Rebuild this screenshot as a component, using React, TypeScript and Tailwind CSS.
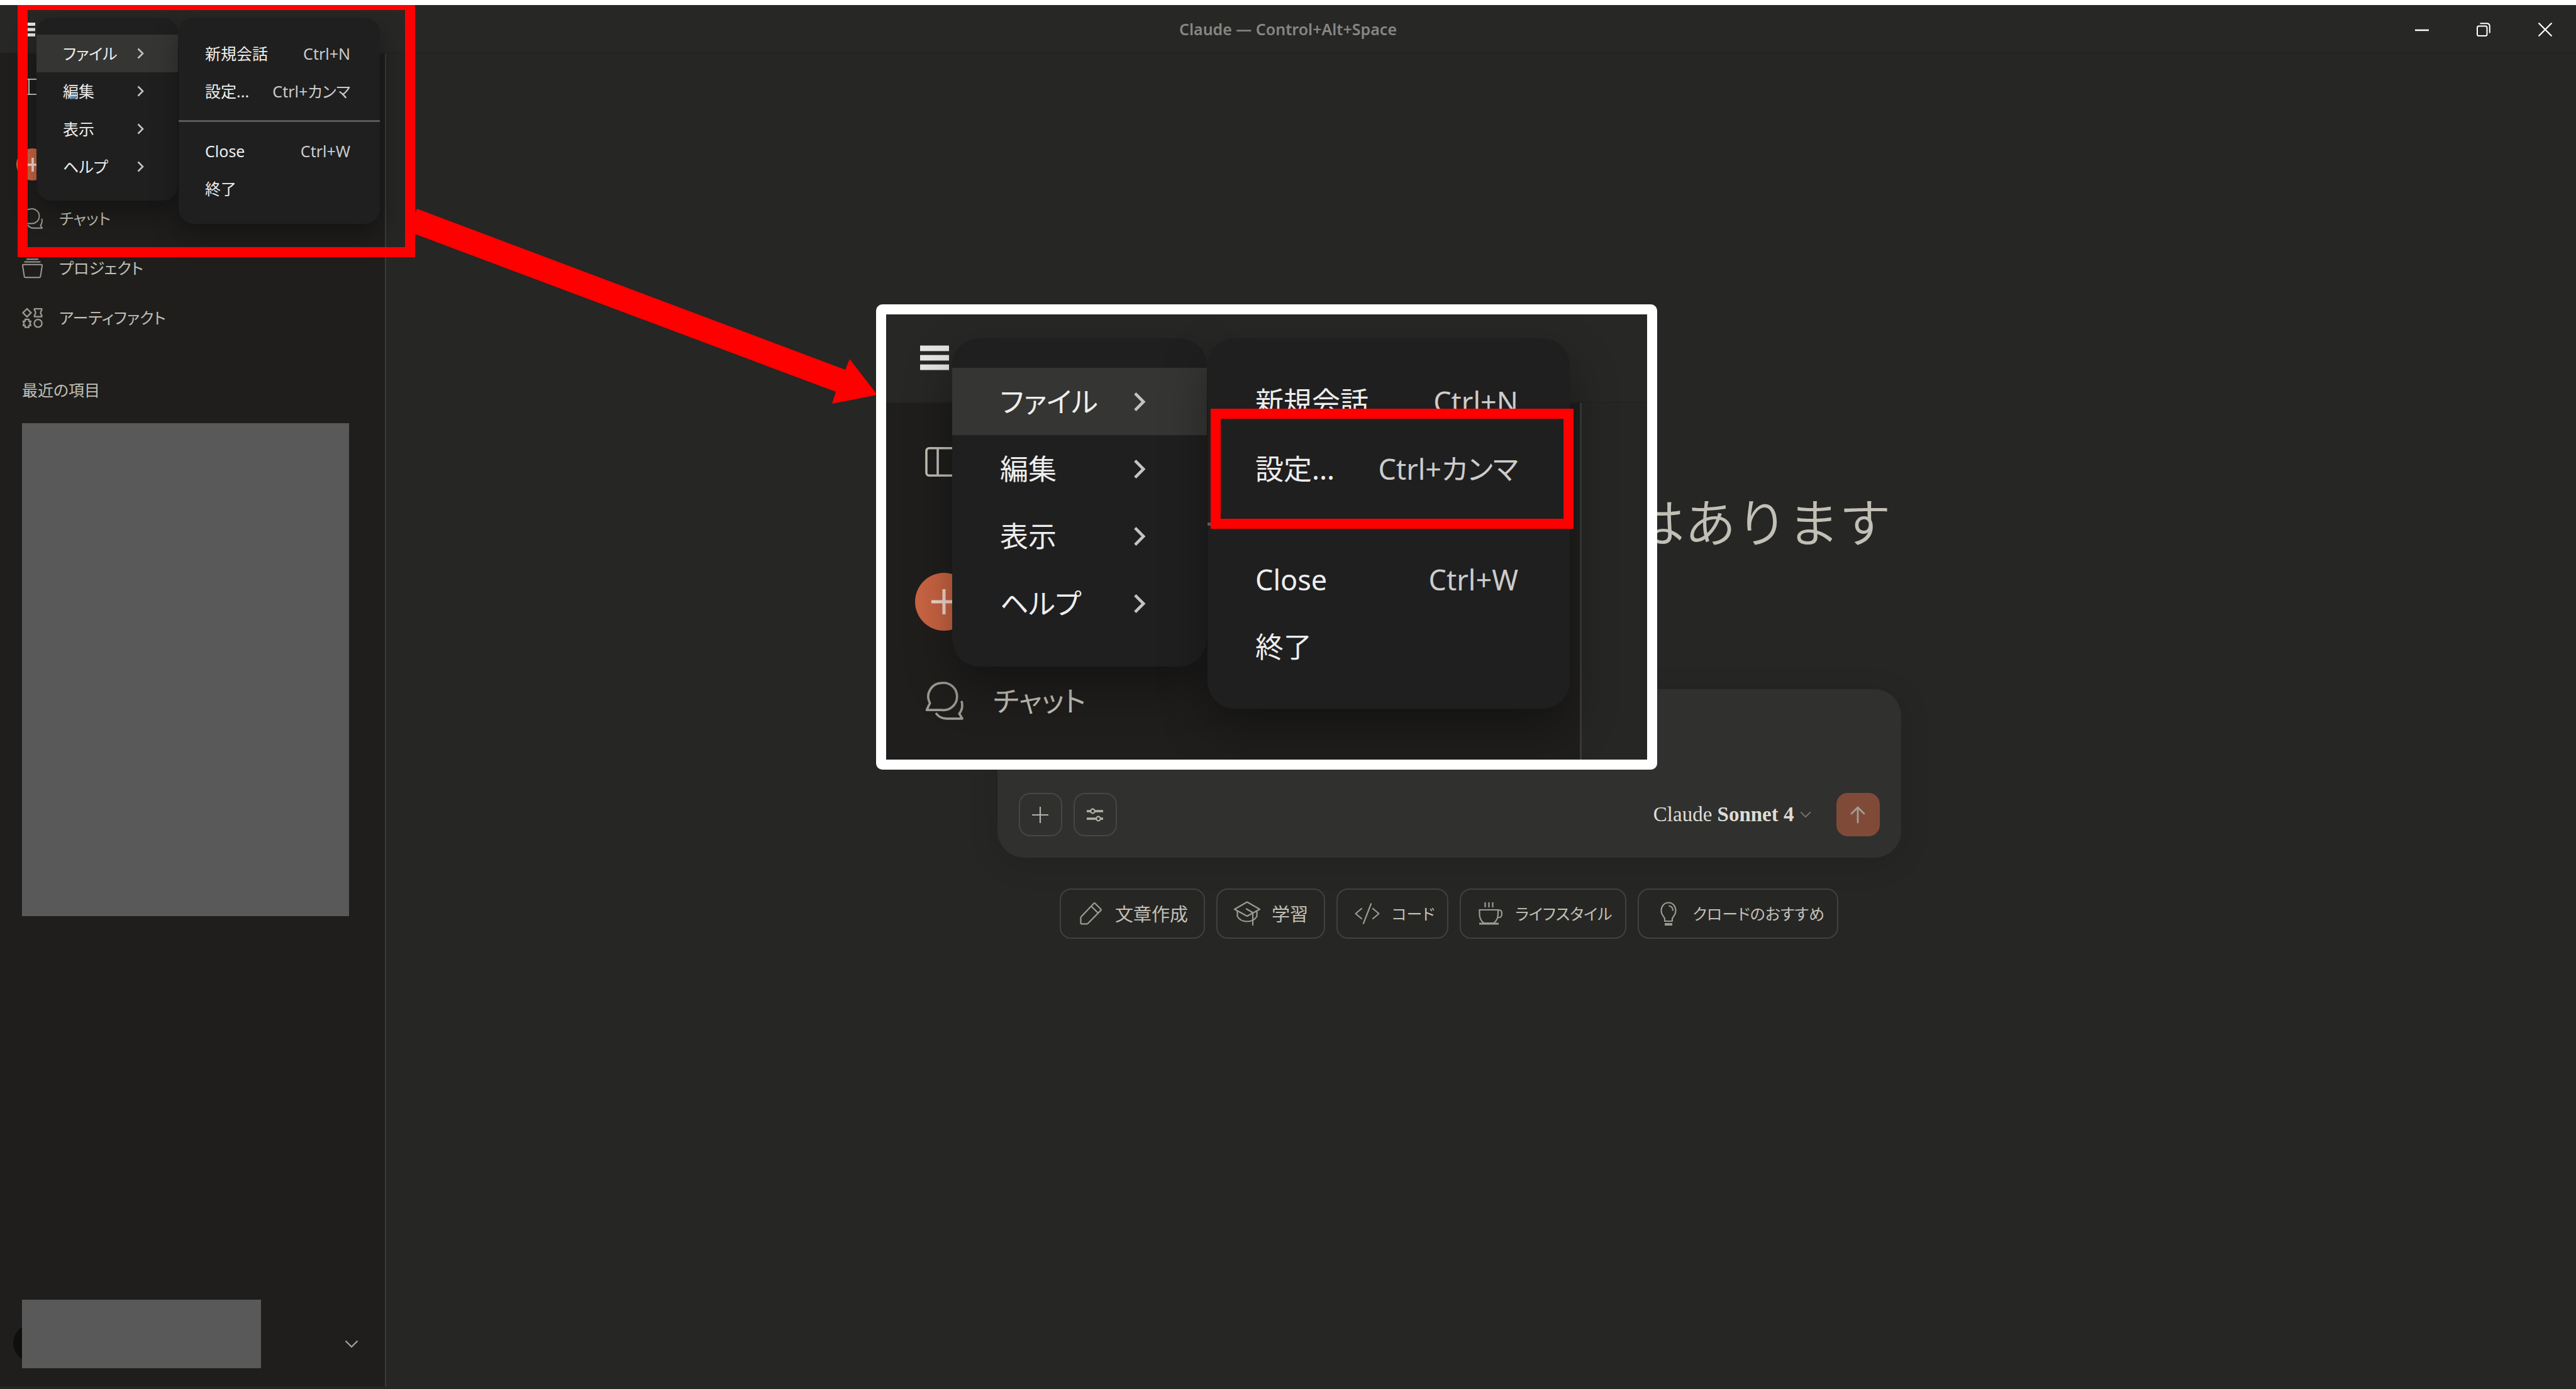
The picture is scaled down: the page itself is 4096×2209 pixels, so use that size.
import React from "react";

type Size = "base" | "large";

type IconProps = { className?: string };

const sans = "font-['Noto_Sans','Noto_Sans_CJK_JP',sans-serif]";

/* ---------- icons ---------- */

function HamburgerIcon({ className }: IconProps) {
  return (
    <svg viewBox="0 0 26 22" className={className} fill="currentColor" aria-hidden="true">
      <rect x="0" y="0" width="26" height="5" />
      <rect x="0" y="8.5" width="26" height="5" />
      <rect x="0" y="17" width="26" height="5" />
    </svg>
  );
}

function PanelIcon({ className }: IconProps) {
  return (
    <svg viewBox="0 0 33 26" className={className} fill="none" stroke="currentColor" strokeWidth="2" aria-hidden="true">
      <rect x="1" y="1" width="31" height="24" rx="2.5" />
      <path d="M11 1v24" />
    </svg>
  );
}

function PlusIcon({ className }: IconProps) {
  return (
    <svg viewBox="0 0 24 24" className={className} fill="none" stroke="currentColor" aria-hidden="true">
      <path d="M12 0v24M0 12h24" />
    </svg>
  );
}

function ChatIcon({ className }: IconProps) {
  return (
    <svg viewBox="0 0 20 20" className={className} fill="none" stroke="currentColor" strokeWidth="1.2" strokeLinejoin="round" aria-hidden="true">
      <path d="M8.7.7a7.1 7.1 0 1 1 0 14.1H.8l1.7-3.6A7.1 7.1 0 0 1 8.7.7z" />
      <path d="M5.6 16.4c1.3 1.9 3.2 2.9 5.6 2.9h8.2l-1.6-2.6c1.5-1.8 1.9-4 1.2-6.6" />
    </svg>
  );
}

function ProjectIcon({ className }: IconProps) {
  return (
    <svg viewBox="0 0 20 20" className={className} fill="none" stroke="currentColor" strokeWidth="1.2" strokeLinejoin="round" aria-hidden="true">
      <path d="M4.3 1.3h11.4M2.2 3.9h15.6M1.4 6.5h17.2q.9 0 .8.9l-1.6 10.6q-.1.9-1 .9H3.2q-.9 0-1-.9L.6 7.4q-.1-.9.8-.9z" />
    </svg>
  );
}

function ArtifactIcon({ className }: IconProps) {
  return (
    <svg viewBox="0 0 20 20" className={className} fill="none" stroke="currentColor" strokeWidth="1.4" strokeLinejoin="round" aria-hidden="true">
      <path d="M4.8 1.2 8.7 5.1 4.8 9 .9 5.1z" />
      <path d="M12 1.3h7v1.3q-2.2 2.5 0 5v1.3h-7V7.6q2.2-2.5 0-5z" />
      <path d="M3 11.4h3.6v1.9h1.9l-.9 2 .9 2H6.6v1.9H3v-1.9H1.1l.9-2-.9-2H3z" />
      <circle cx="15.5" cy="15.3" r="3.7" />
    </svg>
  );
}

function ChevronRight({ className }: IconProps) {
  return (
    <svg viewBox="0 0 11 18" className={className} fill="none" stroke="currentColor" strokeWidth="2.6" aria-hidden="true">
      <path d="M1.5 1.5 9 9l-7.5 7.5" />
    </svg>
  );
}

function ChevronDown({ className }: IconProps) {
  return (
    <svg viewBox="0 0 22 13" className={className} fill="none" stroke="currentColor" strokeWidth="2.2" aria-hidden="true">
      <path d="M1.5 1.5 11 11l9.5-9.5" />
    </svg>
  );
}

function SlidersIcon({ className }: IconProps) {
  return (
    <svg viewBox="0 0 26 24" className={className} fill="none" stroke="currentColor" strokeWidth="3.6" aria-hidden="true">
      <path d="M0 6h6M13 6h13M0 18h15M22 18h4" />
      <circle cx="9.5" cy="6" r="3.3" strokeWidth="2.2" />
      <circle cx="18.5" cy="18" r="3.3" strokeWidth="2.2" />
    </svg>
  );
}

function ArrowUpIcon({ className }: IconProps) {
  return (
    <svg viewBox="0 0 24 28" className={className} fill="none" stroke="currentColor" strokeWidth="2.8" strokeLinecap="round" strokeLinejoin="round" aria-hidden="true">
      <path d="M12 26V2M2 12 12 2l10 10" />
    </svg>
  );
}

function PencilIcon({ className }: IconProps) {
  return (
    <svg viewBox="0 0 38 38" className={className} fill="none" stroke="currentColor" strokeWidth="2.2" strokeLinejoin="round" aria-hidden="true">
      <path d="M26 2.5 35.5 12q.8.8 0 1.6L15 34.5q-.8.8-2 .8H5q-1.5 0-1.5-1.5v-8q0-1.2.8-2L24.5 2.5q.8-.7 1.5 0zM20.5 7.5l10 10" />
    </svg>
  );
}

function GraduationIcon({ className }: IconProps) {
  return (
    <svg viewBox="0 0 42 40" className={className} fill="none" stroke="currentColor" strokeWidth="2.2" strokeLinejoin="round" strokeLinecap="round" aria-hidden="true">
      <path d="M21 1.5 41 13 21 24 1 13z" />
      <path d="M5.5 16v8.5C9 30 14.5 32.5 21 32.5S33 30 36.5 24.5V16" />
      <path d="M20 12.5 30 18.5V38" />
    </svg>
  );
}

function CodeIcon({ className }: IconProps) {
  return (
    <svg viewBox="0 0 40 34" className={className} fill="none" stroke="currentColor" strokeWidth="2.2" strokeLinecap="round" strokeLinejoin="round" aria-hidden="true">
      <path d="M11 9 1.5 17l9.5 8M29 9l9.5 8-9.5 8M26 1.5 14 32.5" />
    </svg>
  );
}

function CupIcon({ className }: IconProps) {
  return (
    <svg viewBox="0 0 38 36" className={className} fill="none" stroke="currentColor" strokeWidth="2.2" aria-hidden="true">
      <path d="M10.5 0v8M16.5 0v8M22.5 0v8" />
      <path d="M1.5 12h29.5v6c0 7-2.5 12-7 15H8.5c-4.5-3-7-8-7-15z" />
      <path d="M31 12.5h2.5c2 0 3.5 2 3.5 5.5s-1.5 6-3.5 6H30.5" />
      <path d="M1 34h31" strokeWidth="3" />
    </svg>
  );
}

function BulbIcon({ className }: IconProps) {
  return (
    <svg viewBox="0 0 32 38" className={className} fill="none" stroke="currentColor" strokeWidth="2.2" strokeLinejoin="round" aria-hidden="true">
      <path d="M10 31v-3.5c0-3-5.5-6-5.5-13C4.5 7 9.5 1.5 16 1.5S27.5 7 27.5 14.5c0 7-5.5 10-5.5 13V31z" />
      <path d="M16.5 6.5c4 .5 6.5 3.5 6.5 8" />
      <path d="M10 36h12" strokeWidth="4" />
    </svg>
  );
}

/* ---------- menus ---------- */

const menuSizes = {
  base: {
    wrap: "gap-px text-[25px]",
    first: "w-[225px] pt-[27px] pb-6 rounded-3xl",
    second: "w-[320px] pt-[27px] pb-[26px] rounded-3xl",
    row: "h-[60px] pl-[42px] pr-[54px]",
    rowSecond: "h-[60px] pl-[42px] pr-[47px]",
    chevron: "w-[11px] h-[18px]",
    separator: "my-4 border-t-[3px]",
    shadow: "shadow-[0_18px_40px_rgba(0,0,0,0.35)]",
  },
  large: {
    wrap: "gap-px text-[45px]",
    first: "w-[405px] pt-[47px] pb-[47px] rounded-[43px]",
    second: "w-[576px] pt-[47px] pb-[45px] rounded-[43px]",
    row: "h-[107px] pl-[76px] pr-[97px]",
    rowSecond: "h-[107px] pl-[76px] pr-[82px]",
    chevron: "w-[20px] h-[32px]",
    separator: "my-8 border-t-[5px]",
    shadow: "shadow-[0_32px_72px_rgba(0,0,0,0.35)]",
  },
};

const topLevel = ["ファイル", "編集", "表示", "ヘルプ"];

const fileItems: (null | { label: string; keys?: string })[] = [
  { label: "新規会話", keys: "Ctrl+N" },
  { label: "設定...", keys: "Ctrl+カンマ" },
  null,
  { label: "Close", keys: "Ctrl+W" },
  { label: "終了" },
];

function Menus({ size }: { size: Size }) {
  const s = menuSizes[size];
  return (
    <div className={`flex items-start leading-none text-[#eeeeee] ${s.wrap}`}>
      <div role="menu" className={`flex flex-col bg-[#1f1f1f] ${s.first} ${s.shadow}`}>
        {topLevel.map((label, i) => (
          <button
            key={label}
            role="menuitem"
            type="button"
            className={`flex items-center justify-between whitespace-nowrap ${s.row} ${i === 0 ? "bg-[#353533]" : ""}`}
          >
            <span>{label}</span>
            <ChevronRight className={`shrink-0 text-[#c4c4c4] ${s.chevron}`} />
          </button>
        ))}
      </div>
      <div role="menu" className={`flex flex-col bg-[#1f1f1f] ${s.second} ${s.shadow}`}>
        {fileItems.map((item, i) =>
          item ? (
            <button
              key={item.label}
              role="menuitem"
              type="button"
              className={`flex items-center justify-between whitespace-nowrap ${s.rowSecond}`}
            >
              <span>{item.label}</span>
              {item.keys && <span className="text-[#cccccc]">{item.keys}</span>}
            </button>
          ) : (
            <hr key={i} className={`border-[#5a5a5a] ${s.separator}`} />
          ),
        )}
      </div>
    </div>
  );
}

/* ---------- sidebar ---------- */

function NavLink({ icon, label, size = "base" }: { icon: React.ReactNode; label: string; size?: Size }) {
  return (
    <a
      href="#"
      className={
        size === "base"
          ? "flex h-[79px] items-center gap-[26px] text-[25px] leading-none text-[#c2c0b6]"
          : "flex h-[142px] items-center gap-[47px] text-[45px] leading-none text-[#c2c0b6]"
      }
    >
      {icon}
      <span className="whitespace-nowrap">{label}</span>
    </a>
  );
}

function Sidebar() {
  return (
    <aside className="mb-1 flex w-[614px] shrink-0 flex-col border-r-2 border-[#3a3a38] bg-[#1f1e1d] pl-[35px]">
      <button type="button" aria-label="サイドバー" className="mt-10 w-[33px] text-[#c2c0b6]">
        <PanelIcon className="h-[26px] w-[33px]" />
      </button>
      <button
        type="button"
        aria-label="新規"
        className="-ml-[9px] mt-[85px] flex size-[51px] items-center justify-center rounded-full bg-[#c96442] text-[#f3d9ce]"
      >
        <PlusIcon className="size-[22px] stroke-[4]" />
      </button>
      <nav className="mt-[21px]">
        <NavLink icon={<ChatIcon className="size-[33px] text-[#9c9a92]" />} label="チャット" />
        <NavLink icon={<ProjectIcon className="size-[33px] text-[#9c9a92]" />} label="プロジェクト" />
        <NavLink icon={<ArtifactIcon className="size-[33px] text-[#9c9a92]" />} label="アーティファクト" />
      </nav>
      <h2 className="mt-[57px] text-[25px] leading-[37px] text-[#c2c0b6]">最近の項目</h2>
      <div className="mt-[34px] h-[784px] w-[520px] bg-[#595959]" />
      <div className="mb-[29px] mt-auto flex items-end">
        <div className="relative">
          <div className="absolute -left-[14px] top-[39px] size-[60px] rounded-full bg-[#0f0f0e]" />
          <div className="relative h-[109px] w-[380px] bg-[#595959]" />
        </div>
        <button type="button" aria-label="アカウント" className="mb-8 ml-[133px] text-[#a8a69e]">
          <ChevronDown className="h-[13px] w-[22px]" />
        </button>
      </div>
    </aside>
  );
}

/* ---------- main area ---------- */

const chips = [
  { label: "文章作成", text: "pr-[25px] text-[29px]", icon: <PencilIcon className="size-[38px] shrink-0" /> },
  { label: "学習", text: "pr-[25px] text-[29px]", icon: <GraduationIcon className="size-[42px] shrink-0" /> },
  { label: "コード", text: "pr-5 text-[25px]", icon: <CodeIcon className="size-[40px] shrink-0" /> },
  { label: "ライフスタイル", text: "pr-5 text-[25px]", icon: <CupIcon className="size-[38px] shrink-0" /> },
  { label: "クロードのおすすめ", text: "pr-5 text-[25px]", icon: <BulbIcon className="size-[38px] shrink-0" /> },
];

function MainArea() {
  return (
    <main className="flex flex-1 flex-col items-center pr-[102px] pt-[682px]">
      <h1 className="w-[1405px] text-right text-[82px] font-[350] leading-[120px] text-[#c2c0b6] font-['Noto_Sans_CJK_JP',sans-serif] [font-feature-settings:normal]">
        はあります
      </h1>
      <form className="mt-[209px] flex w-[1437px] flex-col rounded-[42px] bg-[#30302e] px-[34px] pb-[34px] shadow-[0_8px_50px_rgba(0,0,0,0.12)]">
        <textarea aria-label="メッセージ" className="h-[165px] resize-none bg-transparent outline-none" />
        <div className="flex items-center">
          <button type="button" aria-label="追加" className="flex size-[69px] items-center justify-center rounded-[18px] border-2 border-[#474642] text-[#b4b2a8]">
            <PlusIcon className="size-[26px] stroke-2" />
          </button>
          <button type="button" aria-label="ツール" className="ml-[18px] flex size-[69px] items-center justify-center rounded-[18px] border-2 border-[#474642] text-[#b4b2a8]">
            <SlidersIcon className="h-6 w-[26px]" />
          </button>
          <button type="button" className="ml-auto flex items-center gap-[9px] text-[33px] leading-none text-[#dddcd6] font-['Liberation_Serif',serif]">
            <span>
              Claude <span className="font-bold">Sonnet 4</span>
            </span>
            <ChevronDown className="h-[11px] w-[18px] text-[#77766f]" />
          </button>
          <button type="submit" aria-label="送信" className="ml-10 flex size-[69px] items-center justify-center rounded-[18px] bg-[#7f4b38] text-[#a39d98]">
            <ArrowUpIcon className="h-7 w-6" />
          </button>
        </div>
      </form>
      <div className="mt-[49px] flex gap-[18px]">
        {chips.map((chip) => (
          <button
            key={chip.label}
            type="button"
            className={`flex h-20 items-center gap-5 whitespace-nowrap rounded-[18px] border-2 border-[#42413d] pl-7 leading-none text-[#c2c0b6] ${chip.text}`}
          >
            <span className="flex w-[38px] justify-center text-[#9c9a92]">{chip.icon}</span>
            {chip.label}
          </button>
        ))}
      </div>
    </main>
  );
}

/* ---------- title bar ---------- */

function TitleBar() {
  return (
    <header className="grid h-[77px] grid-cols-[1fr_auto_1fr] items-center border-b-2 border-[#232322] bg-[#272725]">
      <button type="button" aria-label="メニュー" className="ml-[30px] w-[26px] text-[#e6e6e6]">
        <HamburgerIcon className="h-[22px] w-[26px]" />
      </button>
      <div className="text-[25px] font-semibold leading-none text-[#868684]">Claude — Control+Alt+Space</div>
      <div className="flex justify-self-end text-white">
        <button type="button" aria-label="最小化" className="flex h-[77px] w-[98px] items-center justify-center">
          <svg viewBox="0 0 22 22" className="size-[22px]" stroke="currentColor" strokeWidth="2.5" aria-hidden="true">
            <path d="M0 12h22" />
          </svg>
        </button>
        <button type="button" aria-label="元に戻す" className="flex h-[77px] w-[98px] items-center justify-center">
          <svg viewBox="0 0 22 22" className="size-[22px]" fill="none" stroke="currentColor" strokeWidth="2" aria-hidden="true">
            <rect x="1" y="5.5" width="15.5" height="15.5" rx="2.5" />
            <path d="M5.5 1.2H16q4.800 0 4.800 4.800v10.500" />
          </svg>
        </button>
        <button type="button" aria-label="閉じる" className="flex h-[77px] w-[98px] items-center justify-center">
          <svg viewBox="0 0 22 22" className="size-[22px]" fill="none" stroke="currentColor" strokeWidth="2.2" aria-hidden="true">
            <path d="M.5.5l21 21M21.5.5l-21 21" />
          </svg>
        </button>
      </div>
    </header>
  );
}

/* ---------- magnified call-out ---------- */

function Magnified() {
  return (
    <section className="absolute left-[1393px] top-[484px] w-[1242px] rounded-[10px] bg-white p-4">
      <div className="relative overflow-hidden bg-[#262624]">
        <div className="h-[141px] border-b-2 border-[#232322] bg-[#272725] pl-[54px] pt-[49px]">
          <HamburgerIcon className="h-[40px] w-[46px] text-[#e6e6e6]" />
        </div>
        <div className="flex">
          <div className="flex w-[1106px] flex-col border-r-[3px] border-[#3a3a38] bg-[#1f1e1d] pb-[23px] pl-[62px]">
            <PanelIcon className="mt-[70px] h-[47px] w-[60px] text-[#c2c0b6]" />
            <div className="-ml-4 mt-[153px] flex size-[92px] items-center justify-center rounded-full bg-[#c96442] text-[#f3d9ce]">
              <PlusIcon className="size-[40px] stroke-[3]" />
            </div>
            <div className="mt-10">
              <NavLink size="large" icon={<ChatIcon className="size-[61px] text-[#9c9a92]" />} label="チャット" />
            </div>
          </div>
        </div>
        <div className="absolute left-[105px] top-[38px]">
          <Menus size="large" />
        </div>
      </div>
      <div className="absolute left-[532px] top-[166px] h-[191px] w-[577px] border-[16px] border-[#ff0000]" />
    </section>
  );
}

function PointerArrow() {
  return (
    <svg viewBox="649 332 746 312" className="absolute left-[649px] top-[332px] h-[312px] w-[746px]" aria-hidden="true">
      <polygon points="663,332 1344,588 1351,571 1395,628 1323,642 1329,623 649,368" fill="#ff0000" />
    </svg>
  );
}

export default function App() {
  return (
    <div className={`relative flex min-h-screen flex-col overflow-hidden border-t-8 border-white bg-[#262624] [font-feature-settings:'palt'] ${sans}`}>
      <TitleBar />
      <div className="flex flex-1">
        <Sidebar />
        <MainArea />
      </div>
      <div className="absolute left-[58px] top-5">
        <Menus size="base" />
      </div>
      <div className="absolute inset-x-0 -top-2">
        <PointerArrow />
        <Magnified />
        <div className="absolute left-7 top-0 h-[409px] w-[632px] border-[16px] border-[#ff0000]" />
      </div>
    </div>
  );
}
